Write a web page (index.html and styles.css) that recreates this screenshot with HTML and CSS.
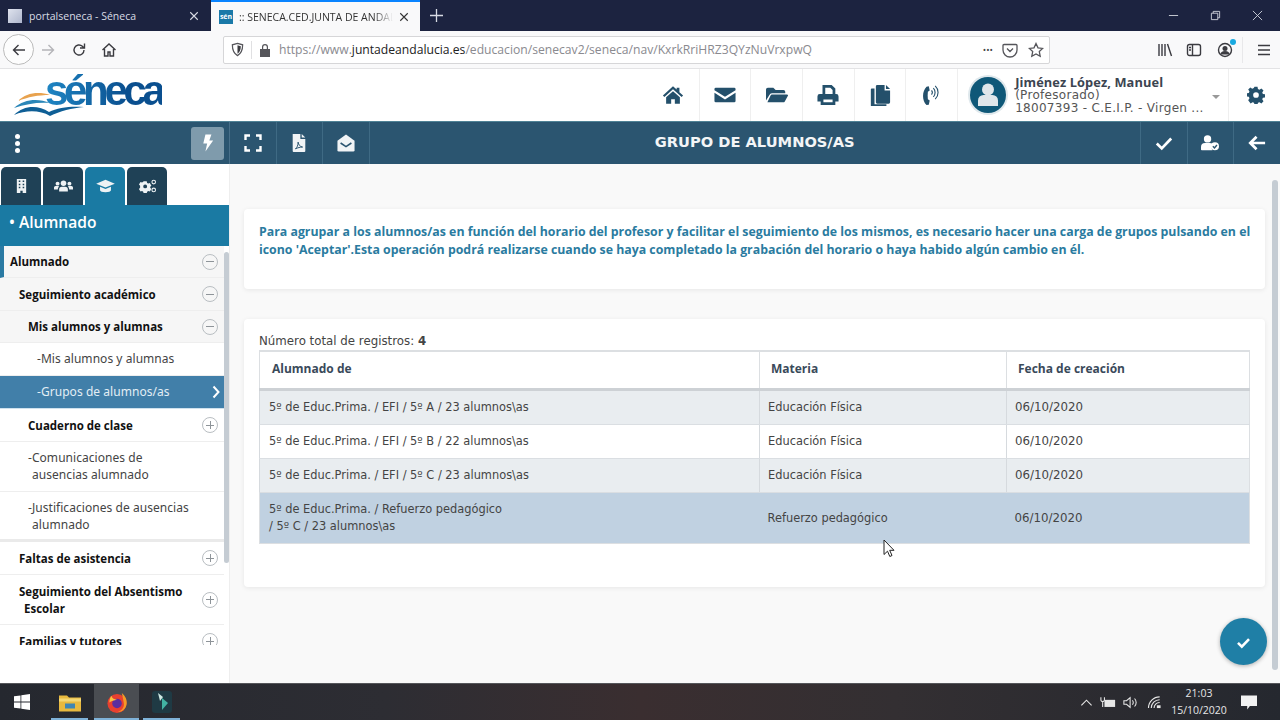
FILE: index.html
```html
<!DOCTYPE html>
<html lang="es">
<head>
<meta charset="utf-8">
<title>Séneca</title>
<link rel="stylesheet" href="styles.css">
</head>
<body>
<div class="tabbar">
  <div class="tab">
    <span class="favicon page"></span><span class="tab-title">portalseneca - Séneca</span>
    <svg class="tab-x" viewBox="0 0 12 12"><path d="M1.5 1.5l9 9M10.5 1.5l-9 9"/></svg>
  </div>
  <div class="tab active">
    <span class="favicon sen">sén</span><span class="tab-title fade">:: SENECA.CED.JUNTA DE ANDALUCIA</span>
    <svg class="tab-x" viewBox="0 0 12 12"><path d="M1.5 1.5l9 9M10.5 1.5l-9 9"/></svg>
  </div>
  <svg class="newtab" viewBox="0 0 14 14"><path d="M7 0v14M0 7h14"/></svg>
  <div class="winctl">
    <svg viewBox="0 0 12 12"><path d="M1 6h10"/></svg>
    <svg viewBox="0 0 12 12"><path d="M1.5 3.5h7v7h-7zM3.5 3.5v-2h7v7h-2"/></svg>
    <svg viewBox="0 0 12 12"><path d="M1 1l10 10M11 1L1 11"/></svg>
  </div>
</div>

<div class="toolbar">
  <span class="back"><svg viewBox="0 0 16 16"><path d="M14 8H2.5M7.5 3l-5 5 5 5"/></svg></span>
  <svg class="tb fwd" viewBox="0 0 16 16"><path d="M2 8h11.5M8.5 3l5 5-5 5"/></svg>
  <svg class="tb reload" viewBox="0 0 16 16"><path d="M13 8a5 5 0 1 1-1.6-3.7L13 6M13.500 1.500V6H9"/></svg>
  <svg class="tb homeb" viewBox="0 0 16 16"><path d="M1.500 8L8 2l6.500 6M3.500 7v7h3.500v-4h2v4h3.500V7"/></svg>
  <div class="urlbar">
    <svg class="u-shield" viewBox="0 0 16 16"><path d="M8 1.500l5.500 1.500c0 5-1 9-5.500 11.500C3.500 12 2.500 8 2.500 3z"/><path class="fill" d="M8 3.500l3.500 1c0 3.500-.8 6-3.500 8z"/></svg>
    <span class="u-sep"></span>
    <svg class="u-lock" viewBox="0 0 12 14"><path d="M1 6h10v8H1zM3 6V4a3 3 0 0 1 6 0v2H7.800V4a1.800 1.800 0 0 0-3.600 0v2z"/></svg>
    <span class="url">https://www.<b>juntadeandalucia.es</b>/educacion/senecav2/seneca/nav/KxrkRriHRZ3QYzNuVrxpwQ</span>
    <span class="u-dots">•••</span>
    <svg class="u-ico" viewBox="0 0 16 16"><path d="M2 2.500h12a1 1 0 0 1 1 1V8a7 7 0 0 1-14 0V3.500a1 1 0 0 1 1-1zM5 6.500l3 3 3-3"/></svg>
    <svg class="u-ico" viewBox="0 0 16 16"><path d="M8 1.500l2 4.300 4.700.6-3.400 3.200.9 4.700L8 12l-4.200 2.300.9-4.700L1.300 6.400 6 5.800z"/></svg>
  </div>
  <div class="tb-right">
    <svg class="tb" viewBox="0 0 16 16"><path d="M2 2v12M5 2v12M8 2v12M10.500 2l4 12"/></svg>
    <svg class="tb" viewBox="0 0 16 16"><rect x="1.500" y="2.500" width="13" height="11" rx="2"/><path d="M6.500 2.500v11M3 5.500h2M3 8h2"/></svg>
    <span class="acct"><svg class="tb" viewBox="0 0 16 16"><circle cx="8" cy="8" r="6.500"/><circle class="fill" cx="8" cy="6.500" r="2.500"/><path class="fill" d="M3.500 12.500a4.500 3.500 0 0 1 9 0z"/></svg><i></i></span>
    <span class="tb-sep"></span>
    <svg class="tb" viewBox="0 0 16 16"><path d="M2 3.500h12M2 8h12M2 12.500h12"/></svg>
  </div>
</div>

<header class="apphead">
  <div class="logo">
    <svg class="logo-mark" viewBox="0 0 72 26">
      <path fill="#e8a24e" d="M4 11C12 3 24 1 36 5 24 5 14 7 4 11z"/>
      <path fill="#2a86b8" d="M0 18C10 9 24 8 36 13 24 12 12 14 0 18z"/>
      <path fill="#0f5f96" d="M0 25C10 15 24 15 35 22 44 17 58 16 70 17 58 18 46 21 36 26 26 20 12 20 0 25z"/>
    </svg>
    <span class="logo-text">séneca</span>
  </div>
  <nav class="head-icons">
    <a><svg viewBox="0 0 24 24"><path d="M12 2.500L1 12.500l1.600 1.800L12 5.800l9.400 8.500 1.600-1.800-4-3.600V4h-3v2z"/><path d="M12 7.800L4.500 14.500V21.500h5.500v-5h4v5h5.500v-7z"/></svg></a>
    <a><svg viewBox="0 0 24 24"><path d="M2 4h20a1.500 1.500 0 0 1 1.500 1.500v1.300L12 14 .5 6.800V5.500A1.500 1.500 0 0 1 2 4z"/><path d="M.5 9.500L12 16.800l11.500-7.300v9A1.500 1.500 0 0 1 22 20H2a1.500 1.500 0 0 1-1.500-1.500z"/></svg></a>
    <a><svg viewBox="0 0 24 24"><path d="M0 6a2 2 0 0 1 2-2h6l2.500 2.500H19a2 2 0 0 1 2 2V10H6.500a3 3 0 0 0-2.800 2L0 18z"/><path d="M6.500 11.500H23a1 1 0 0 1 .9 1.400L20.500 19a2 2 0 0 1-1.800 1H1.500l3.500-7.500a1.700 1.700 0 0 1 1.500-1z"/></svg></a>
    <a><svg viewBox="0 0 24 24"><path fill-rule="evenodd" d="M6 1h10l4 4v6h-3V6.500L14.500 4H9v7H6zM3 11h18a2.500 2.500 0 0 1 2.500 2.500V19H20v4H4v-4H.5v-5.500A2.500 2.500 0 0 1 3 11zM7 17v3h10v-3z"/></svg></a>
    <a><svg viewBox="0 0 24 24"><path d="M9 1h8v6h6v13a1.500 1.500 0 0 1-1.500 1.500H9A1.500 1.500 0 0 1 7.500 20V2.500A1.500 1.500 0 0 1 9 1zM18.500 1l4.500 4.500h-4.500zM6 5v17h13v1.500a1 1 0 0 1-1 1H3a1 1 0 0 1-1-1V6a1 1 0 0 1 1-1z"/></svg></a>
    <a><svg viewBox="0 0 24 24"><path d="M6 3l2.500-.5 1 4.500-2 1.500c-.3 2.500-.3 5.500 0 8l2 1.500-1 4.500L6 23C1 18 1 8 6 3z"/><path class="thin" d="M11.500 7a3.500 3.500 0 0 1 0 4.500M13.500 4.500a7 7 0 0 1 0 9.500M15.500 2a10 10 0 0 1 0 14.500"/></svg></a>
  </nav>
  <div class="user">
    <span class="avatar"><svg viewBox="0 0 36 36"><circle cx="18" cy="12.500" r="6"/><path d="M8 29v-5.500a5.500 5.500 0 0 1 5.500-5.500h9a5.500 5.500 0 0 1 5.500 5.500V29z"/></svg></span>
    <div class="user-text">
      <strong>Jiménez López, Manuel</strong>
      <span>(Profesorado)</span>
      <span>18007393 - C.E.I.P. - Virgen ...</span>
    </div>
    <span class="caret"></span>
  </div>
  <a class="gear"><svg viewBox="0 0 24 24"><path fill-rule="evenodd" d="M10 1h4l.6 3 2 .9 2.600-1.700 2.800 2.800-1.700 2.600.9 2 3 .6v4l-3 .6-.9 2 1.700 2.600-2.800 2.800-2.600-1.700-2 .9-.6 3h-4l-.6-3-2-.9-2.600 1.700L1.600 19l1.700-2.600-.9-2-3-.6v-4l3-.6.9-2L1.600 4.600 4.400 2l2.600 1.700 2-.9zM12 8.200a3.800 3.800 0 1 0 0 7.600 3.800 3.800 0 0 0 0-7.600z"/></svg></a>
</header>

<div class="topbar">
  <div class="top-left">
    <span class="kebab"><i></i><i></i><i></i></span>
    <span class="bolt"><svg viewBox="0 0 14 20"><path d="M4 0h7L8.500 7H13L4 20l2-9.500H1.500z"/></svg></span>
  </div>
  <div class="top-tools">
    <a><svg viewBox="0 0 18 18"><path class="line" d="M1.500 6V1.500H6M12 1.500h4.500V6M16.500 12v4.500H12M6 16.500H1.500V12"/></svg></a>
    <a><svg viewBox="0 0 16 20"><path d="M1 0h8.500v5.500H15V19a1 1 0 0 1-1 1H2a1 1 0 0 1-1-1zM11 0l4 4h-4z"/><path class="cut-line thin-cut" d="M4 16.500c2-1.500 3-4 3-7.500 .5 3 2 5 5 5.500-3 0-5 .7-8 2z"/></svg></a>
    <a><svg viewBox="0 0 20 20"><path d="M10 .5l9.500 7v10.500a1.500 1.500 0 0 1-1.500 1.500H2A1.500 1.500 0 0 1 .5 18V7.500z"/><path class="cut-line" d="M4 10l6 4 6-4"/></svg></a>
  </div>
  <h1>GRUPO DE ALUMNOS/AS</h1>
  <div class="top-actions">
    <a><svg viewBox="0 0 20 20"><path class="line thick" d="M2 10.500l5.500 5.500L18 5"/></svg></a>
    <a><svg viewBox="0 0 22 20"><circle cx="8" cy="5" r="4.500"/><path d="M0 18v-3a5 5 0 0 1 5-5h6a5 5 0 0 1 4 2 5.500 5.500 0 0 0-1 7H1a1 1 0 0 1-1-1z"/><circle cx="17" cy="14" r="5"/><path class="cut-line" d="M14.500 14l2 2 3-3.500"/></svg></a>
    <a><svg viewBox="0 0 20 20"><path class="line thick" d="M19 10H3M9.500 3L2.500 10l7 7"/></svg></a>
  </div>
</div>

<div class="workspace">
  <aside class="side">
    <div class="side-tabs">
      <a><svg viewBox="0 0 14 18"><path fill-rule="evenodd" d="M1 0h12v18H8.500v-3h-3v3H1zM3.500 2v2h2V2zM8.500 2v2h2V2zM3.500 6v2h2V6zM8.500 6v2h2V6zM3.500 10v2h2v-2zM8.500 10v2h2v-2z"/></svg></a>
      <a><svg viewBox="0 0 24 16"><circle cx="12" cy="4.500" r="3.500"/><circle cx="4.500" cy="5" r="2.500"/><circle cx="19.500" cy="5" r="2.500"/><path d="M6.500 15v-2.500A3.500 3.500 0 0 1 10 9h4a3.500 3.500 0 0 1 3.500 3.500V15zM0 12.500V10a2 2 0 0 1 2-2h3c.5 0 1 .2 1.300.5a5 5 0 0 0-1.500 4zM24 12.500V10a2 2 0 0 0-2-2h-3c-.5 0-1 .2-1.300.5a5 5 0 0 1 1.500 4z"/></svg></a>
      <a class="on"><svg viewBox="0 0 24 18"><path d="M12 1L0 6l12 5 12-5z"/><path d="M5 10v4.500c0 1.500 3 2.500 7 2.500s7-1 7-2.500V10l-7 3z"/></svg></a>
      <a><svg viewBox="0 0 24 18"><path fill-rule="evenodd" d="M7 3h4l.5 2 1.500.9 2-.7 2 3.400-1.500 1.400v1.400l1.500 1.400-2 3.400-2-.7-1.500.9-.5 2H7l-.5-2-1.500-.9-2 .7-2-3.400 1.500-1.400V8.600L1 7.200l2-3.400 2 .7 1.500-.9zM9 7a2.500 2.500 0 1 0 0 5 2.500 2.500 0 0 0 0-5z"/><circle class="ringo" cx="20" cy="4" r="2.300"/><circle class="ringo" cx="20" cy="14" r="2.300"/></svg></a>
    </div>
    <div class="side-title">• Alumnado</div>
    <div class="side-body">
      <ul class="menu">
        <li class="row l1 open first"><span>Alumnado</span><i class="tog minus"></i></li>
        <li class="row l2 open"><span>Seguimiento académico</span><i class="tog minus"></i></li>
        <li class="row l3 open short"><span>Mis alumnos y alumnas</span><i class="tog minus"></i></li>
        <li class="row sub"><span>-Mis alumnos y alumnas</span></li>
        <li class="row sub sel"><span>-Grupos de alumnos/as</span><svg class="chev" viewBox="0 0 8 14"><path d="M1.500 1.500L6.500 7l-5 5.500"/></svg></li>
        <li class="row l3"><span>Cuaderno de clase</span><i class="tog plus"></i></li>
        <li class="row sub2 tall raise"><span>-Comunicaciones de<br>ausencias alumnado</span></li>
        <li class="row sub2 tall heavy"><span>-Justificaciones de ausencias alumnado</span></li>
        <li class="row l2"><span>Faltas de asistencia</span><i class="tog plus"></i></li>
        <li class="row l2 tall hang"><span>Seguimiento del Absentismo Escolar</span><i class="tog plus"></i></li>
        <li class="row l2"><span>Familias y tutores</span><i class="tog plus"></i></li>
      </ul>
      <div class="side-track"><i></i></div>
    </div>
  </aside>

  <main class="content">
    <div class="cards">
      <section class="card notice">
        <p>Para agrupar a los alumnos/as en función del horario del profesor y facilitar el seguimiento de los mismos, es necesario hacer una carga de grupos pulsando en el<br>icono 'Aceptar'.Esta operación podrá realizarse cuando se haya completado la grabación del horario o haya habido algún cambio en él.</p>
      </section>
      <section class="card listing">
        <div class="count">Número total de registros: <b>4</b></div>
        <table>
          <colgroup><col class="c1"><col class="c2"><col class="c3"></colgroup>
          <thead><tr><th>Alumnado de</th><th>Materia</th><th>Fecha de creación</th></tr></thead>
          <tbody>
            <tr class="odd h35"><td>5º de Educ.Prima. / EFI / 5º A / 23 alumnos\as</td><td>Educación Física</td><td>06/10/2020</td></tr>
            <tr class="h34"><td>5º de Educ.Prima. / EFI / 5º B / 22 alumnos\as</td><td>Educación Física</td><td>06/10/2020</td></tr>
            <tr class="odd h34"><td>5º de Educ.Prima. / EFI / 5º C / 23 alumnos\as</td><td>Educación Física</td><td>06/10/2020</td></tr>
            <tr class="hl"><td>5º de Educ.Prima. / Refuerzo pedagógico<br>/ 5º C / 23 alumnos\as</td><td>Refuerzo pedagógico</td><td>06/10/2020</td></tr>
          </tbody>
        </table>
      </section>
    </div>
    <div class="main-track"><i></i></div>
    <svg class="cursor" viewBox="0 0 12 19"><path d="M1 1v14.500l3.500-3.300 2.300 5.300 2.200-1-2.300-5.200H11z"/></svg>
    <a class="fab"><svg viewBox="0 0 20 20"><path d="M3.500 10.500l4.500 4.500 8.500-9"/></svg></a>
  </main>
</div>

<footer class="taskbar">
  <span class="start"><svg viewBox="0 0 16 16"><path d="M0 2.300l6.500-.9v6.200H0zM7.300 1.300L16 0v7.600H7.300zM0 8.400h6.500v6.200L0 13.700zM7.300 8.400H16V16l-8.700-1.300z"/></svg></span>
  <span class="task run folder"><svg viewBox="0 0 22 18"><path fill="#e8b93f" d="M0 2h8l2 2h12v14H0z"/><path fill="#f4d774" d="M0 5h22v3H0z"/><path fill="#3f86b5" d="M6 10h10v5H6z"/></svg></span>
  <span class="task run fox"><svg viewBox="0 0 22 22"><circle cx="11" cy="12" r="10" fill="#e8402f"/><path fill="#f59a26" d="M16 1c4 3 6 8 5 12-1 5-5 8-9 8 5-2 7-6 6-10-.4-3-1-6-2-10z"/><circle cx="11" cy="12" r="5" fill="#5b2e9e"/><path fill="#f7c240" d="M5 4c1 3 3 4 6 4-3 1-6 1-8 3 0-3 1-5 2-7z"/></svg></span>
  <span class="task run app"><svg viewBox="0 0 18 22"><path fill="#cfe9e4" d="M5 2l5 4-3 4z"/><path fill="#42b3a3" d="M9 7l6 5-6 7z"/></svg></span>
  <div class="tray">
    <svg class="t-ico chevup" viewBox="0 0 14 14"><path d="M1.500 10L7 4.500 12.500 10"/></svg>
    <svg class="t-ico wide batt" viewBox="0 0 18 14"><path class="solid" d="M5 4h12v8H5z"/><path d="M1 1v3a2 2 0 0 0 4 0V1M3 6v6"/></svg>
    <svg class="t-ico wide vol" viewBox="0 0 18 14"><path d="M1 5h3l4-3.500v11L4 9H1zM10.500 4.500a3.500 3.500 0 0 1 0 5M13 2.500a6.500 6.500 0 0 1 0 9"/></svg>
    <svg class="t-ico wide" viewBox="0 0 16 14"><path d="M1 13A12 12 0 0 1 13 1M4 13a9 9 0 0 1 9-9M7 13a6 6 0 0 1 6-6"/><path class="solid" d="M10 10h4v3h-4z"/></svg>
    <div class="clock"><span>21:03</span><span>15/10/2020</span></div>
    <svg class="notif" viewBox="0 0 18 16"><path d="M0 0h18v12H10l-3 4v-4H0z"/></svg>
  </div>
</footer>
</body>
</html>
```
FILE: styles.css
```css
* { box-sizing: border-box; }
html, body { margin: 0; height: 720px; width: 1280px; overflow: hidden; }
body { display: flex; flex-direction: column; font-family: "DejaVu Sans", sans-serif; color: #333; background: #fff; }
ul { list-style: none; margin: 0; padding: 0; }
a { display: flex; align-items: center; justify-content: center; }
svg { display: block; flex: none; }

/* browser tabs */
.tabbar { height: 31px; background: #1c2340; display: flex; align-items: stretch; font-family: "Open Sans", sans-serif; font-size: 10.500px; flex: none; }
.tab { flex: none; width: 210px; display: flex; align-items: center; padding: 0 11px 0 8px; color: #d8dbe4; margin-right: 1px; }
.tab.active { width: 209px; background: #f9f9fa; color: #333; border-top: 2px solid #0a84ff; }
.favicon { width: 14px; height: 14px; margin-right: 7px; flex: none; }
.favicon.page { background: linear-gradient(135deg, #dfe3ee, #aeb6cc); }
.favicon.sen { background: #1a79a8; color: #fff; font-size: 7px; line-height: 14px; text-align: center; font-weight: 700; margin-right: 6px; }
.tab-title { flex: 1; min-width: 0; white-space: nowrap; overflow: hidden; }
.tab-title.fade { -webkit-mask-image: linear-gradient(90deg, #000 88%, transparent); mask-image: linear-gradient(90deg, #000 88%, transparent); }
.tab-x { width: 10px; height: 10px; fill: none; stroke: currentColor; stroke-width: 1.3; margin-left: 6px; }
.newtab { width: 13px; height: 13px; fill: none; stroke: #d8dbe4; stroke-width: 1.4; margin: 9px 0 0 9px; }
.winctl { margin-left: auto; display: flex; align-items: center; gap: 31px; padding-right: 17px; }
.winctl svg { width: 11px; height: 11px; fill: none; stroke: #d0d3dc; stroke-width: 1; }

/* browser toolbar */
.toolbar { height: 38px; background: #f9f9fa; display: flex; align-items: center; padding-left: 3px; border-bottom: 1px solid #e3e3e5; flex: none; }
.tb { width: 16px; height: 16px; fill: none; stroke: #3b3b40; stroke-width: 1.4; }
.tb .fill, .u-shield .fill { fill: #3b3b40; stroke: none; }
.back { width: 31px; height: 31px; border: 1px solid #bbb; border-radius: 50%; display: flex; align-items: center; justify-content: center; background: #fdfdfd; }
.back svg { width: 16px; height: 16px; fill: none; stroke: #3b3b40; stroke-width: 1.4; }
.fwd { margin-left: 6px; stroke: #b4b4b8; }
.reload { margin-left: 15px; }
.homeb { margin-left: 14px; }
.urlbar { margin-left: 106px; width: 827px; height: 28px; background: #fff; border: 1px solid #d6d6d8; border-radius: 2px; display: flex; align-items: center; padding-left: 6px; font-family: "Open Sans", sans-serif; }
.u-shield { width: 15px; height: 15px; fill: none; stroke: #55555a; stroke-width: 1.3; }
.u-sep { width: 1px; height: 18px; background: #e0e0e2; margin: 0 7px 0 6px; }
.u-lock { width: 12px; height: 14px; fill: #55555a; }
.url { font-size: 12.150px; color: #8a8a8f; margin-left: 8px; white-space: nowrap; }
.url b { font-weight: 400; color: #222; }
.u-dots { margin-left: auto; font-size: 9px; color: #444; margin-right: 9px; }
.u-ico { width: 16px; height: 16px; fill: none; stroke: #55555a; stroke-width: 1.3; margin-right: 10px; }
.u-ico:last-child { margin-right: 5px; }
.tb-right { display: flex; align-items: center; margin-left: 107px; gap: 13px; }
.acct { position: relative; display: block; margin-left: 2px; }
.acct i { position: absolute; top: -3px; right: -3px; width: 6px; height: 6px; border-radius: 50%; background: #19a9e0; }
.tb-sep { width: 1px; height: 26px; background: #e8e8ea; margin-left: -4px; }

/* app header */
.apphead { height: 52px; background: #fff; display: flex; align-items: stretch; flex: none; }
.logo { width: 648px; padding-left: 14px; display: flex; align-items: flex-end; }
.logo-mark { width: 72px; height: 26px; margin-bottom: 5px; }
.logo-text { font-family: "Liberation Sans", sans-serif; font-weight: 700; font-size: 42px; letter-spacing: -4.300px; background: linear-gradient(90deg, #1f86c4, #0a4f8f 70%); -webkit-background-clip: text; background-clip: text; color: transparent; line-height: 40px; margin-left: -41px; height: 50px; }
.head-icons { display: flex; }
.head-icons a { width: 51.700px; border-right: 1px solid #efefef; }
.head-icons svg { width: 22px; height: 22px; fill: #24506b; }
.head-icons .thin { fill: none; stroke: #24506b; stroke-width: 1.2; }
.user { width: 271px; display: flex; align-items: center; padding-left: 12px; border-right: 1px solid #efefef; }
.avatar { width: 36px; height: 36px; border-radius: 50%; background: #0f5878; box-shadow: 0 0 0 2px #dfe8ec; flex: none; }
.avatar svg { width: 36px; height: 36px; fill: #dfe6ea; }
.user-text { margin-left: 9px; display: flex; flex-direction: column; font-size: 12px; line-height: 13px; color: #555; letter-spacing: .3px; white-space: nowrap; }
.user-text strong { color: #3b4450; font-weight: 700; letter-spacing: .1px; font-family: "Open Sans", sans-serif; font-size: 12.800px; }
.caret { width: 0; height: 0; border: 4px solid transparent; border-top: 4px solid #999; margin: 8px 0 0 8px; }
.gear { flex: 1; padding-left: 2px; }
.gear svg { width: 18px; height: 18px; fill: #24506b; }

/* app top bar */
.topbar { height: 43px; background: #2b5570; border-top: 1px solid #4f8296; color: #fff; display: flex; align-items: stretch; position: relative; flex: none; }
.top-left { width: 230px; display: flex; align-items: center; justify-content: space-between; padding: 0 5px 0 15px; border-right: 1px solid #49708a; }
.kebab { display: flex; flex-direction: column; gap: 2px; }
.kebab i { width: 5px; height: 5px; border-radius: 50%; background: #fff; }
.bolt { width: 33px; height: 33px; border-radius: 3px; background: #7f9bac; display: flex; align-items: center; justify-content: center; }
.bolt svg { width: 12px; height: 18px; fill: #fff; }
.top-tools { display: flex; }
.top-tools a { width: 46.500px; border-right: 1px solid #3f6a84; }
.top-tools svg { width: 18px; height: 18px; fill: #f1f4f6; }
.line { fill: none; stroke: #fff; stroke-width: 2.400; }
.thick { stroke-width: 3; }
.cut-line { fill: none; stroke: #2b5570; stroke-width: 1.800; }
.thin-cut { stroke-width: 1.100; }
.topbar h1 { flex: 1; margin: 0; text-align: center; font-size: 14.650px; font-weight: 700; line-height: 40px; color: #f3f5f7; font-family: "DejaVu Sans", sans-serif; }
.top-actions { display: flex; }
.top-actions a { width: 46.700px; border-left: 1px solid #3f6a84; }
.top-actions svg { width: 18px; height: 18px; fill: #fff; }

/* workspace */
.workspace { height: 519px; display: flex; flex: none; }
.side { width: 230px; background: #fff; display: flex; flex-direction: column; flex: none; border-right: 1px solid #eee; }
.side-tabs { height: 41px; padding: 3px 0 0 1px; display: flex; gap: 2px; flex: none; }
.side-tabs a { width: 40px; background: #1f4156; border-radius: 5px 5px 0 0; }
.side-tabs a.on { background: #1a7aa3; }
.side-tabs svg { width: 19px; height: 14px; fill: #eef2f4; }
.ringo { fill: none; stroke: #eef2f4; stroke-width: 1.400; }
.side-title { height: 41px; background: #1a7aa3; color: #fff; font-family: "Open Sans", sans-serif; font-weight: 600; font-size: 15.600px; line-height: 34px; padding-left: 9px; flex: none; }
.side-body { display: flex; height: 399px; overflow: hidden; }
.menu { width: 224px; flex: none; }
.row { height: 33px; display: flex; align-items: center; justify-content: space-between; font-size: 11.500px; font-family: "Open Sans", sans-serif; font-weight: 700; color: #111; border-bottom: 1px solid #eee; padding-right: 6px; }
.row span { display: block; }
.open { background: #f6f6f6; }
.first { height: 32px; border-left: 4px solid #2a7aa3; padding-left: 6px !important; background: #f6f6f6; }
.short { height: 32px; }
.tall { height: 50px; }
.l1 { padding-left: 9px; }
.l2 { padding-left: 19px; }
.l3 { padding-left: 28px; }
.hang span { padding-left: 5px; text-indent: -5px; width: 186px; line-height: 17px; }
.sub, .sub2 { font-family: "Noto Sans", sans-serif; font-weight: 400; font-size: 12px; letter-spacing: .05px; color: #444; }
.sub { padding-left: 37px; padding-bottom: 2px; }
.sub2 { padding-left: 28px; }
.raise { padding-bottom: 2px; }
.sub2 span { padding-left: 4px; text-indent: -4px; width: 178px; line-height: 17px; }
.sel { background: #417fa9; color: #e3eef5; border-bottom: 0; box-shadow: inset 0 -1px 0 #cfe2ee; padding-right: 4px; }
.chev { width: 8px; height: 14px; fill: none; stroke: #fff; stroke-width: 2; }
.heavy { border-bottom: 3px solid #eaeaea; }
.tog { width: 16px; height: 16px; border: 1px solid #b9bec2; border-radius: 50%; position: relative; flex: none; }
.tog::before { content: ""; position: absolute; left: 3px; right: 3px; top: 6.500px; height: 1px; background: #8e9499; }
.plus::after { content: ""; position: absolute; top: 3px; bottom: 3px; left: 6.500px; width: 1px; background: #8e9499; }
.side-track { width: 6px; padding-top: 6px; flex: none; }
.side-track i { display: block; width: 5px; height: 311px; background: #c5ccd3; border-radius: 3px; }

/* main */
.content { flex: 1; position: relative; background: #f9f9f9; display: flex; }
.cards { width: 1035px; padding: 45px 0 0 14px; display: flex; flex-direction: column; gap: 30px; }
.card { width: 1021px; background: #fff; border-radius: 4px; box-shadow: 0 1px 5px rgba(0, 0, 0, .08); }
.notice { height: 80px; padding: 14px 15px 0; }
.notice p { margin: 0; font-family: "Open Sans", sans-serif; font-weight: 700; font-size: 12.330px; line-height: 18px; color: #2a7ba0; white-space: nowrap; }
.listing { height: 268px; padding: 13px 15px 0; }
.count { font-size: 11.800px; line-height: 18px; color: #444; }
.count b { font-weight: 700; }
table { width: 990px; table-layout: fixed; border-collapse: collapse; border: 1px solid #dcdfe2; border-top-width: 2px; font-size: 11.400px; color: #444; }
.c1 { width: 500px; }
.c2 { width: 247px; }
.c3 { width: 243px; }
th { height: 38px; text-align: left; padding: 0 0 3px 12px; font-family: "Open Sans", sans-serif; font-weight: 700; font-size: 12px; color: #3a4a5a; background: #fff; border-left: 1px solid #dcdfe2; border-bottom: 3px solid #cdd1d5; }
th + th { padding-left: 11px; }
td { padding: 1px 0 0 9px; line-height: 17px; border-left: 1px solid #d6dade; border-bottom: 1px solid #dadee2; }
td + td { padding-left: 8px; }
td:last-child { font-size: 11.800px; }
.h35 td { height: 35px; }
.h34 td { height: 34px; }
.odd td { background: #e9edf0; }
.hl td { height: 51px; background: #c0d1e1; border: 0; }

/* overlays */
.main-track { flex: 1; padding: 16px 0 0 7px; }
.main-track i { display: block; width: 6px; height: 490px; background: #c5ccd3; border-radius: 3px; }
.cursor { position: absolute; left: 653px; top: 375px; width: 12px; height: 19px; fill: #fff; stroke: #222; stroke-width: 1; }
.fab { position: absolute; left: 990px; top: 454px; width: 47px; height: 47px; border-radius: 50%; background: #1f7fa6; box-shadow: 0 1px 4px rgba(0, 0, 0, .3); }
.fab svg { width: 17px; height: 17px; fill: none; stroke: #fff; stroke-width: 3; margin-top: 2px; }

/* taskbar */
.taskbar { flex: 1; background: linear-gradient(90deg, #25282f 0%, #2d2d33 30%, #3a2e30 50%, #332f32 70%, #25282f 100%); display: flex; align-items: stretch; color: #e6e6e6; border-top: 1px solid #55565a; }
.start { width: 44px; display: flex; align-items: center; justify-content: center; }
.start svg { width: 16px; height: 16px; fill: #fff; }
.task { display: flex; align-items: center; justify-content: center; }
.task svg { width: 22px; height: 21px; }
.run { box-shadow: inset 0 -2px 0 #7fb2d8; }
.folder { margin-left: 7px; width: 37px; }
.fox { margin-left: 6px; width: 45px; background: #4a4d52; }
.app { margin-left: 4px; width: 37px; }
.app svg { background: #1f3a44; border-radius: 3px; width: 20px; height: 22px; }
.tray { margin-left: auto; display: flex; align-items: center; font-family: "Open Sans", sans-serif; }
.t-ico { width: 13px; height: 13px; fill: none; stroke: #e6e6e6; stroke-width: 1.200; margin-right: 9px; }
.t-ico.wide { width: 16px; margin-right: 9px; }
.t-ico.chevup { margin-right: 7px; }
.t-ico.batt { margin-right: 7px; }
.t-ico.vol { margin-right: 8px; }
.t-ico .solid { fill: #e6e6e6; stroke: none; }
.clock { display: flex; flex-direction: column; align-items: center; font-size: 10.500px; line-height: 17px; width: 58px; margin-left: -2px; }
.notif { width: 16px; height: 15px; fill: #f2f2f2; margin: 0 23px 0 13px; }
```
